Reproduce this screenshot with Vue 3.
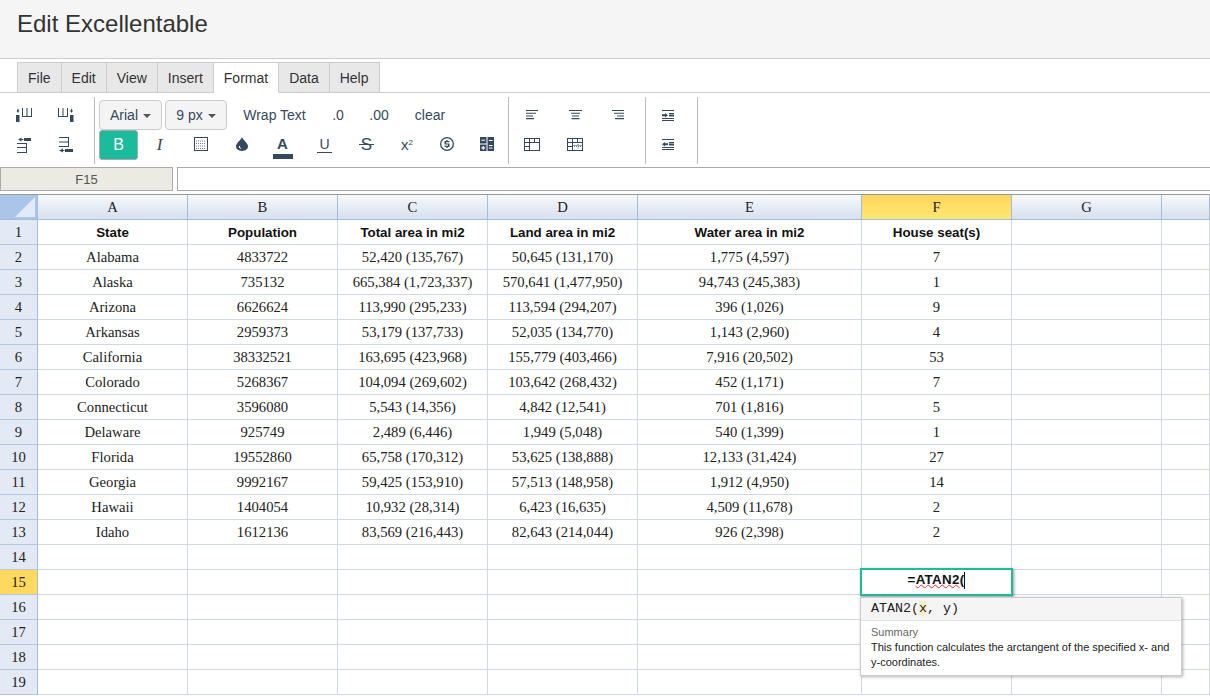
<script setup>
const tabs = ['File', 'Edit', 'View', 'Insert', 'Format', 'Data', 'Help']

const I = {
  colL: 'M.5 3.500 2 .5l1.500 3zM1.500 3h1v1.500h-1zM0 7h3.500v7H0zM6 0h1v8h3.500V0h1v8H15V0h1v9H6z',
  colR: 'M0 0h1v8h3.500V0h1v8H9V0h1v9H0zM12 3.500 13.500.5l1.500 3zM13 3h1v1.500h-1zM12 7h3.500v7H12z',
  rowT: 'M1 2.500 4.500.5v4zM4 2h2.500v1H4zM7 1h7v3H7zM0 6h10v1H0zM0 10h10v1H0zM0 15h10v1H0zM9 6h1v10H9z',
  rowB: 'M0 0h10v1H0zM0 4.500h10v1H0zM0 9h10v1H0zM9 0h1v10H9zM0 13.500l4-2v4zM3 13h2.500v1H3zM6 12h8v3H6z',
  merge: 'M0 0h14v14H0zM1 1v12h12V1z',
  drop: 'M6 0c1 3 6 6 6 9.300C12 12 9.500 14 6 14S0 12 0 9.300C0 6 5 3 6 0zM2.800 9c0 1.700 1.200 3 3 3.100C4.700 11.400 4 10.300 4 9z',
  dollar: 'M7 0a7 7 0 1 1 0 14A7 7 0 0 1 7 0zm0 1.300a5.700 5.700 0 1 0 0 11.400A5.700 5.700 0 0 0 7 1.300zM6.400 3h1.200v1h1.900v1.200H6v1.200h3.500V10H7.600v1H6.400v-1H4.500V8.800H8V7.600H4.500V4h1.900z',
  calc: 'M0 0h6.500v6.500H0zM1.500 2.700v1.100h3.500V2.700zM7.500 0H14v14H7.500zM9 3v1.100h3.500V3zM9 8v1.100h3.500V8zM9 10.500v1.100h3.500v-1.100zM0 7.500h6.500V14H0zM2.700 9v1.300H1.400v1.100h1.300v1.300h1.100v-1.300h1.300v-1.100H3.800V9z',
  alL: 'M0 0h12v1.100H0zM0 2.700h10v1.100H0zM0 5.400h7v1.100H0zM0 8.100h8v1.100H0z',
  alC: 'M0 0h13v1.100H0zM2 2.700h9v1.100H2zM3 5.400h7v1.100H3zM2.500 8.100h8v1.100h-8z',
  alR: 'M0 0h12v1.100H0zM2 2.700h10v1.100H2zM5 5.400h7v1.100H5zM3 8.100h9v1.100H3z',
  tb1: 'M0 0h16v13H0zM1 1v3h4V1zM6 1v3h4V1zM11 1v3h4V1zM1 5v3h4V5zM6 5v7h9V5zM1 9v3h4V9z',
  tb2: 'M0 0h16v13H0zM1 1v3h4V1zM6 1v3h4V1zM11 1v3h4V1zM1 5v3h4V5zM1 9v3h4V9zM6 5v2.500h9V5zM6 8v4h9V8z',
  indent: 'M0 0h12v1H0zM7 3h5v1.500H7zM7 5h5v1.500H7zM0 8h12v1H0zM0 10h12v1H0zM0 4.300h3V3l3 2.250L3 7.500V6.200H0z',
  outdent: 'M0 0h12v1H0zM7 3h5v1.500H7zM7 5h5v1.500H7zM0 8h12v1H0zM0 10h12v1H0zM6 4.300H3V3L0 5.250 3 7.500V6.200h3z'
}

const colLabels = ['A', 'B', 'C', 'D', 'E', 'F', 'G', '']
const head = ['State', 'Population', 'Total area in mi2', 'Land area in mi2', 'Water area in mi2', 'House seat(s)', '', '']
const data = [
  ['Alabama', '4833722', '52,420 (135,767)', '50,645 (131,170)', '1,775 (4,597)', '7'],
  ['Alaska', '735132', '665,384 (1,723,337)', '570,641 (1,477,950)', '94,743 (245,383)', '1'],
  ['Arizona', '6626624', '113,990 (295,233)', '113,594 (294,207)', '396 (1,026)', '9'],
  ['Arkansas', '2959373', '53,179 (137,733)', '52,035 (134,770)', '1,143 (2,960)', '4'],
  ['California', '38332521', '163,695 (423,968)', '155,779 (403,466)', '7,916 (20,502)', '53'],
  ['Colorado', '5268367', '104,094 (269,602)', '103,642 (268,432)', '452 (1,171)', '7'],
  ['Connecticut', '3596080', '5,543 (14,356)', '4,842 (12,541)', '701 (1,816)', '5'],
  ['Delaware', '925749', '2,489 (6,446)', '1,949 (5,048)', '540 (1,399)', '1'],
  ['Florida', '19552860', '65,758 (170,312)', '53,625 (138,888)', '12,133 (31,424)', '27'],
  ['Georgia', '9992167', '59,425 (153,910)', '57,513 (148,958)', '1,912 (4,950)', '14'],
  ['Hawaii', '1404054', '10,932 (28,314)', '6,423 (16,635)', '4,509 (11,678)', '2'],
  ['Idaho', '1612136', '83,569 (216,443)', '82,643 (214,044)', '926 (2,398)', '2']
]
const rows = []
rows.push({ n: 1, cells: head, bold: true })
data.forEach((d, i) => rows.push({ n: i + 2, cells: [...d, '', ''] }))
for (let n = 14; n <= 19; n++) rows.push({ n, cells: ['', '', '', '', '', '', '', ''] })
</script>

<template>
  <div class="page">
    <header class="title-bar"><h1>Edit Excellentable</h1></header>

    <nav class="tabs">
      <div v-for="t in tabs" :key="t" class="tab" :class="{ active: t === 'Format' }">{{ t }}</div>
    </nav>

    <section class="toolbar">
      <div class="group g1">
        <button class="tool"><svg width="17" height="14" viewBox="0 0 17 14"><path :d="I.colL" /></svg></button>
        <button class="tool"><svg width="17" height="14" viewBox="0 0 17 14"><path :d="I.colR" /></svg></button>
        <button class="tool"><svg width="15" height="16" viewBox="0 0 15 16"><path :d="I.rowT" /></svg></button>
        <button class="tool"><svg width="15" height="16" viewBox="0 0 15 16"><path :d="I.rowB" /></svg></button>
      </div>
      <div class="group g2">
        <div class="row">
          <button class="select s-font">Arial<span class="caret"></span></button>
          <button class="select s-size">9 px<span class="caret"></span></button>
          <button class="text-btn wrap">Wrap Text</button>
          <button class="text-btn dec1">.0</button>
          <button class="text-btn dec2">.00</button>
          <button class="text-btn clr">clear</button>
        </div>
        <div class="row">
          <button class="bold-btn">B</button>
          <button class="tool w41 glyph italic">I</button>
          <button class="tool w41 up">
            <svg width="14" height="14" viewBox="0 0 14 14">
              <path :d="I.merge" fill-rule="evenodd" />
              <path class="dots" d="M2 4h10M2 6.500h10M2 9h10M2 11.500h10" />
            </svg>
          </button>
          <button class="tool w41 up"><svg width="12" height="14" viewBox="0 0 12 14"><path :d="I.drop" fill-rule="evenodd" /></svg></button>
          <button class="tool w41 color-a"><span class="a-letter">A</span><span class="a-bar"></span></button>
          <button class="tool w42 glyph"><span class="under">U</span></button>
          <button class="tool w41 glyph"><span class="strike">S</span></button>
          <button class="tool w40 glyph sup">x<sup>2</sup></button>
          <button class="tool w40 up"><svg width="14" height="14" viewBox="0 0 14 14"><path :d="I.dollar" fill-rule="evenodd" /></svg></button>
          <button class="tool w40 up"><svg width="14" height="14" viewBox="0 0 14 14"><path :d="I.calc" fill-rule="evenodd" /></svg></button>
        </div>
      </div>
      <div class="group g3">
        <button class="tool"><svg width="12" height="10" viewBox="0 0 12 10"><path :d="I.alL" /></svg></button>
        <button class="tool"><svg width="13" height="10" viewBox="0 0 13 10"><path :d="I.alC" /></svg></button>
        <button class="tool"><svg width="12" height="10" viewBox="0 0 12 10"><path :d="I.alR" /></svg></button>
        <button class="tool up"><svg width="16" height="13" viewBox="0 0 16 13"><path :d="I.tb1" fill-rule="evenodd" /></svg></button>
        <button class="tool up">
          <svg width="16" height="13" viewBox="0 0 16 13">
            <path :d="I.tb2" fill-rule="evenodd" />
            <path class="dots" d="M7 8.500h8M11 6v1M11 9.500v2" />
          </svg>
        </button>
      </div>
      <div class="group g4">
        <button class="tool"><svg width="12" height="11" viewBox="0 0 12 11"><path :d="I.indent" /></svg></button>
        <button class="tool up"><svg width="12" height="11" viewBox="0 0 12 11"><path :d="I.outdent" /></svg></button>
      </div>
    </section>

    <section class="formula">
      <div class="name-box">F15</div>
      <div class="formula-input"></div>
    </section>

    <section class="sheet">
      <div class="gridrow">
        <div class="corner"><span class="corner-tri"></span></div>
        <div v-for="(c, i) in colLabels" :key="i" class="ch" :class="{ sel: c === 'F' }">{{ c }}</div>
      </div>
      <div v-for="r in rows" :key="r.n" class="gridrow">
        <div class="rh" :class="{ sel: r.n === 15 }">{{ r.n }}</div>
        <div v-for="(c, i) in r.cells" :key="i" class="cell" :class="{ bold: r.bold }">{{ c }}</div>
      </div>

      <div class="editor"><span class="ed-text">=<span class="squiggle">ATAN2</span>(</span></div>
      <div class="hint">
        <div class="hint-sig">ATAN2(<span class="arg">x</span>, y)</div>
        <div class="hint-body">
          <div class="hint-label">Summary</div>
          <div class="hint-desc">This function calculates the arctangent of the specified x- and y-coordinates.</div>
        </div>
      </div>
    </section>
  </div>
</template>

<style scoped>
.page {
  width: 1210px;
  height: 696px;
  overflow: hidden;
  background: #fff;
  font-family: "Liberation Sans", Arial, sans-serif;
  color: #34495e;
}
button {
  border: 0;
  background: none;
  padding: 0;
  margin: 0;
  font: inherit;
  color: inherit;
}
.title-bar {
  height: 59px;
  box-sizing: border-box;
  background: #f5f5f5;
  border-bottom: 1px solid #ccc;
  padding: 10px 17px 0;
}
.title-bar h1 {
  margin: 0;
  font-size: 24px;
  line-height: 27px;
  font-weight: 400;
  color: #333;
}
.tabs {
  display: flex;
  height: 31px;
  margin-top: 3px;
  box-sizing: border-box;
  padding-left: 17px;
  border-bottom: 1px solid #ccc;
}
.tab {
  box-sizing: border-box;
  height: 31px;
  padding: 0 10px;
  line-height: 30px;
  font-size: 14px;
  color: #333;
  background: #e8e8e8;
  border: 1px solid #ccc;
  border-left: 0;
}
.tab:first-child { border-left: 1px solid #ccc; }
.tab.active {
  background: #fff;
  border-bottom-color: #fff;
}
.toolbar {
  display: flex;
  height: 74px;
  box-sizing: border-box;
  padding-top: 4px;
}
.group {
  box-sizing: border-box;
  height: 67px;
  border-right: 1px solid #bbb;
  padding-top: 3px;
}
.g1 {
  width: 95px;
  padding-left: 3px;
  display: grid;
  grid-template-columns: 42px 42px;
  grid-auto-rows: 30px;
}
.g2 { width: 414px; padding-left: 4px; }
.g3 {
  width: 137px;
  padding-left: 1.500px;
  display: grid;
  grid-template-columns: 43px 43px 43px;
  grid-auto-rows: 30px;
}
.g4 {
  width: 52px;
  display: grid;
  grid-template-columns: 44px;
  grid-auto-rows: 30px;
}
.row { display: flex; height: 30px; }
.tool {
  display: flex;
  align-items: center;
  justify-content: center;
  height: 30px;
  fill: #34495e;
}
.up svg { margin-bottom: 2px; }
.w42 { width: 43px; flex: none; }
.w41 { width: 41px; flex: none; }
.w40 { width: 40px; flex: none; }
.dots {
  fill: none;
  stroke: #34495e;
  stroke-width: 1;
  stroke-dasharray: 1 1;
  opacity: .7;
}
.select {
  box-sizing: border-box;
  height: 30px;
  background: #f4f4f4;
  border: 1px solid #ccc;
  border-radius: 4px;
  font-size: 14px;
  color: #34495e;
  display: flex;
  align-items: center;
  justify-content: center;
}
.s-font { width: 63px; margin-right: 3px; }
.s-size { width: 62px; }
.caret {
  margin-left: 5px;
  margin-top: 1px;
  border-top: 4px solid #555;
  border-left: 4px solid transparent;
  border-right: 4px solid transparent;
}
.text-btn {
  font-size: 14px;
  height: 30px;
  text-align: center;
  color: #34495e;
}
.wrap { width: 95px; }
.dec1 { width: 32px; }
.dec2 { width: 50px; }
.clr { width: 52px; }
.bold-btn {
  box-sizing: border-box;
  flex: none;
  width: 39px;
  height: 30px;
  margin-right: 1px;
  background: #1abc9c;
  border: 1px solid #aaa;
  border-radius: 3px;
  color: #fff;
  font-size: 16px;
}
.glyph { font-size: 15px; color: #34495e; }
.italic { font-family: "Liberation Serif", serif; font-style: italic; font-size: 17px; padding-bottom: 1px; box-sizing: border-box; }
.under {
  display: block;
  padding: 0 2px;
  font-size: 14px;
  line-height: 15px;
  border-bottom: 1px solid #34495e;
  margin-bottom: 1px;
}
.strike {
  display: block;
  position: relative;
  padding: 0 2px;
  font-size: 17px;
  line-height: 17px;
  margin-bottom: 2px;
}
.strike::after {
  content: "";
  position: absolute;
  left: 0;
  right: 0;
  top: 8px;
  height: 1px;
  background: #34495e;
}
.sup { font-size: 15px; font-weight: 400; padding-bottom: 2px; box-sizing: border-box; }
.sup sup { font-size: 8px; line-height: 0; position: relative; top: -1px; }
.color-a {
  flex-direction: column;
  justify-content: flex-start;
  box-sizing: border-box;
  padding-top: 5px;
}
.a-letter { font-size: 15px; font-weight: 700; line-height: 17px; }
.a-bar { width: 20px; height: 5px; background: #34495e; margin-top: 2px; }
.formula {
  display: flex;
  height: 28px;
  box-sizing: border-box;
  border-bottom: 1px solid #999;
}
.name-box {
  box-sizing: border-box;
  width: 173px;
  height: 24px;
  background: #ebeae3;
  border: 1px solid #aaa;
  text-align: center;
  line-height: 23px;
  font-size: 13px;
  color: #555;
}
.formula-input {
  box-sizing: border-box;
  flex: 1;
  margin-left: 4px;
  height: 24px;
  border: 1px solid #aaa;
  border-right: 0;
  background: #fff;
}
.sheet { position: relative; }
.gridrow {
  display: grid;
  grid-template-columns: 38px 150px 150px 150px 150px 224px 150px 150px 48px;
  height: 25px;
}
.corner {
  box-sizing: border-box;
  background: #a9c6ea;
  border-right: 1px solid #a3bcd9;
  border-bottom: 1px solid #a3bcd9;
  position: relative;
}
.corner-tri {
  position: absolute;
  right: 2px;
  bottom: 2px;
  width: 0;
  height: 0;
  border-left: 20px solid transparent;
  border-bottom: 20px solid #e2eaf4;
}
.ch {
  box-sizing: border-box;
  background: linear-gradient(#f7f9fc, #d6e0ee);
  border-right: 1px solid #a3bcd9;
  border-bottom: 1px solid #a3bcd9;
  text-align: center;
  font: 14.670px/24px "Liberation Serif", serif;
  color: #222;
}
.ch.sel { background: linear-gradient(#ffd55c, #ffe873); }
.rh {
  box-sizing: border-box;
  background: #e3eaf5;
  border-right: 1px solid #a3bcd9;
  border-bottom: 1px solid #b4c6de;
  text-align: center;
  font: 14.670px/24px "Liberation Serif", serif;
  color: #222;
}
.rh.sel { background: #ffd95e; }
.cell {
  box-sizing: border-box;
  background: #fff;
  border-right: 1px solid #cfd8e6;
  border-bottom: 1px solid #cfd8e6;
  text-align: center;
  font: 14.670px/24px "Liberation Serif", serif;
  color: #222;
  white-space: nowrap;
  overflow: hidden;
}
.cell.bold {
  font: 700 13.330px/26px "Liberation Sans", sans-serif;
  color: #111;
}
.editor {
  position: absolute;
  left: 860px;
  top: 373px;
  box-sizing: border-box;
  width: 153px;
  height: 28px;
  border: 2px solid #1abc9c;
  background: #fff;
  box-shadow: 1px 1px 3px rgba(0, 0, 0, .4);
  text-align: center;
  font: 700 13.330px/20px "Liberation Sans", sans-serif;
  letter-spacing: .3px;
  color: #111;
}
.ed-text {
  display: inline-block;
  border-right: 1px solid #111;
  height: 17px;
  line-height: 16px;
}
.squiggle {
  text-decoration: underline wavy #e03030 1px;
  text-underline-offset: 0;
}
.hint {
  position: absolute;
  left: 860px;
  top: 402px;
  box-sizing: border-box;
  width: 322px;
  height: 79px;
  background: #fff;
  border: 1px solid #ccc;
  box-shadow: 1px 1px 3px rgba(0, 0, 0, .3);
  color: #222;
}
.hint-sig {
  box-sizing: border-box;
  height: 23px;
  padding: 0 10px;
  background: #f5f5f5;
  border-bottom: 1px solid #e2e2e2;
  font: 13.330px/21px "Liberation Mono", monospace;
  color: #222;
}
.arg { background: #fdeecb; }
.hint-body {
  padding: 4px 10px 0;
  font-size: 11px;
  line-height: 15px;
}
.hint-label { color: #666; }
.hint-desc { color: #222; }
</style>

<style>
html, body { margin: 0; background: #fff; }
</style>
